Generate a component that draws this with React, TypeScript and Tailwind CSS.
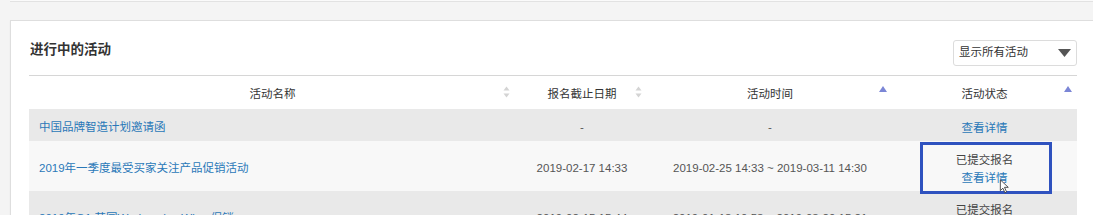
import React from "react";

const font = { fontFamily: '"Liberation Sans", "Noto Sans CJK SC", sans-serif' };

const rows = [
  {
    name: "中国品牌智造计划邀请函",
    deadline: "-",
    time: "-",
    submitted: false,
    bg: "bg-[#e9e9e9]",
    h: "h-[32px]",
  },
  {
    name: "2019年一季度最受买家关注产品促销活动",
    deadline: "2019-02-17 14:33",
    time: "2019-02-25 14:33 ~ 2019-03-11 14:30",
    submitted: true,
    bg: "bg-[#f8f8f8]",
    h: "h-[50px]",
    highlight: true,
  },
  {
    name: "2019年Q1 英国Wednesday Wine 促销",
    deadline: "2019-02-15 15:44",
    time: "2019-01-18 10:53 ~ 2019-03-20 15:21",
    submitted: true,
    bg: "bg-[#e9e9e9]",
    h: "h-[50px]",
  },
];

function SortBoth() {
  return (
    <svg width="7" height="12" viewBox="0 0 7 12" className="absolute right-[6px] top-[10px]">
      <path d="M3.5 0.5 L6.5 4.5 L0.5 4.5 Z" fill="#d4d4d4" />
      <path d="M3.5 11.5 L6.5 7.5 L0.5 7.5 Z" fill="#d4d4d4" />
    </svg>
  );
}

function SortUp() {
  return (
    <svg width="8" height="6" viewBox="0 0 8 6" className="absolute right-[5px] top-[10px]">
      <path d="M4 0 L8 6 L0 6 Z" fill="#7b86d6" />
    </svg>
  );
}

function Cursor() {
  return (
    <svg width="11" height="15" viewBox="0 0 12 18" className="absolute left-[107px] top-[38px]">
      <path
        d="M1 1 L1 14 L4 11 L6.5 16.5 L8.5 15.5 L6 10 L10.5 10 Z"
        fill="#ffffff"
        stroke="#333"
        strokeWidth="1"
        strokeLinejoin="round"
      />
    </svg>
  );
}

export default function App() {
  return (
    <div className="w-[1093px] h-[215px] overflow-hidden bg-[#f4f4f4]" style={font}>
      <div className="ml-[10px] h-[2px] bg-[#fafafa] border-b border-[#e2e2e2]" />
      <div className="ml-[10px] mt-[18px] w-[1086px] bg-white border border-[#dedede] shadow-[0_1px_2px_rgba(0,0,0,0.04)] px-[18px]">
        <div className="flex justify-between h-[55px] border-b border-[#d6d6d6]">
          <div className="pt-[20px] pl-[1px] text-[13.5px] leading-[18px] font-bold text-[#333]">进行中的活动</div>
          <div className="mt-[19px] w-[124px] h-[26px] border border-[#dcdcdc] rounded-[3px] flex items-center justify-between pl-[5px] pr-[5px] text-[11.5px] text-[#333]">
            <span>显示所有活动</span>
            <svg width="13" height="8" viewBox="0 0 13 8">
              <path d="M0 0 L13 0 L6.5 8 Z" fill="#555" />
            </svg>
          </div>
        </div>

        <div className="grid grid-cols-[487px_132px_244px_185px] h-[33px] text-[11.5px] text-[#333] text-center">
          <div className="relative h-full flex items-center justify-center pt-[4px]">
            活动名称
            <SortBoth />
          </div>
          <div className="relative h-full flex items-center justify-center pt-[4px]">
            报名截止日期
            <SortBoth />
          </div>
          <div className="relative h-full flex items-center justify-center pt-[4px]">
            活动时间
            <SortUp />
          </div>
          <div className="relative h-full flex items-center justify-center pt-[4px]">
            活动状态
            <SortUp />
          </div>
        </div>

        {rows.map((r, i) => (
          <div
            key={i}
            className={`grid grid-cols-[487px_132px_244px_185px] ${r.h} ${r.bg} text-[11.5px] text-[#555]`}
          >
            <div className="pl-[10px] pt-[5px] flex items-center text-[#2a78b8]">{r.name}</div>
            <div className="pt-[5px] flex items-center justify-center">{r.deadline}</div>
            <div className="pt-[5px] flex items-center justify-center">{r.time}</div>
            <div className="relative pt-[5px] flex flex-col items-center justify-center leading-[18px]">
              {r.submitted && <span className="text-[#444]">已提交报名</span>}
              <span className="text-[#2a78b8]">查看详情</span>
              {r.highlight && (
                <>
                  <div className="absolute left-[28px] top-[1px] w-[132px] h-[52px] border-[3px] border-[#2f52bf]" />
                  <Cursor />
                </>
              )}
            </div>
          </div>
        ))}
      </div>
    </div>
  );
}
